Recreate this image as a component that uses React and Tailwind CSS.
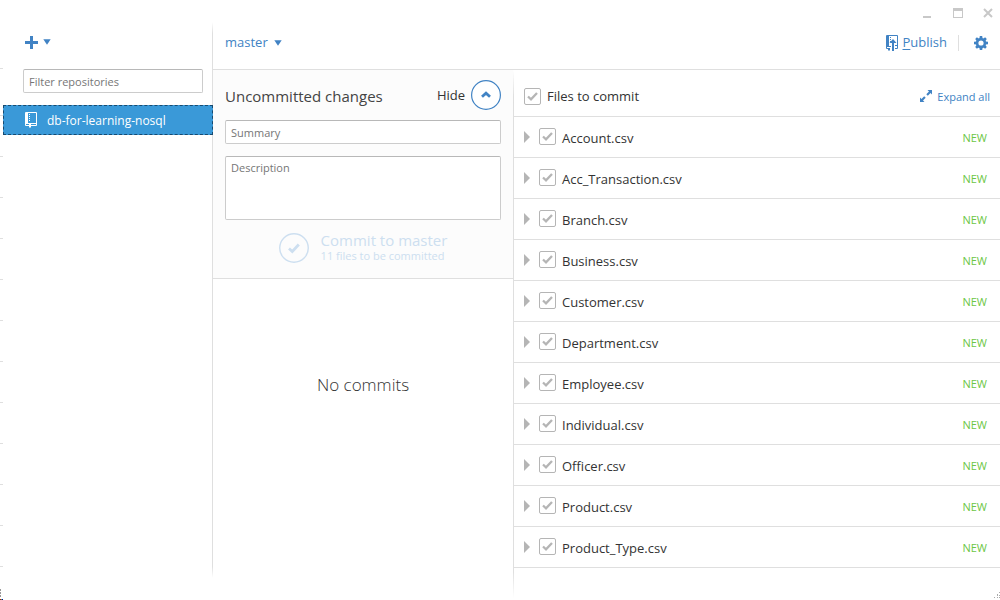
import React from "react";

const files = [
  "Account.csv",
  "Acc_Transaction.csv",
  "Branch.csv",
  "Business.csv",
  "Customer.csv",
  "Department.csv",
  "Employee.csv",
  "Individual.csv",
  "Officer.csv",
  "Product.csv",
  "Product_Type.csv",
];

const field =
  "block w-full rounded-xs border border-[#cccccc] border-t-[#b8b8b8] bg-white px-[5px] text-[11px] text-[#333333] placeholder:text-[#767676] outline-none";

function CaretDown() {
  return (
    <svg width="8" height="6" viewBox="0 0 8 6" aria-hidden="true">
      <path d="M0.300 0.300h7.400L4 5.800z" fill="#4183c4" />
    </svg>
  );
}

function PlusIcon() {
  return (
    <svg width="13" height="13" viewBox="0 0 13 13" aria-hidden="true">
      <path d="M5 0h3v5h5v3H8v5H5V8H0V5h5z" fill="#4183c4" />
    </svg>
  );
}

function RepoIcon() {
  return (
    <svg width="12" height="16" viewBox="0 0 12 16" aria-hidden="true">
      <path
        fill="#fff"
        fillRule="evenodd"
        d="M1 0h10q1 0 1 1v12q0 1-1 1H6v2l-1-1-1 1v-2H1q-1 0-1-1V1q0-1 1-1zM3 1v10h8V1zM1 12v1h3v-1zM6 12v1h5v-1z"
      />
      <path fill="#fff" d="M4 2h1v1H4zM4 4h1v1H4zM4 6h1v1H4zM4 8h1v1H4z" />
    </svg>
  );
}

function PublishIcon() {
  return (
    <svg width="12" height="16" viewBox="0 0 12 16" aria-hidden="true">
      <path
        fill="#4183c4"
        fillRule="evenodd"
        d="M1 0h10q1 0 1 1v12q0 1-1 1H9v-1h2v-2H9v-1h2V1H3v10h2v1H1v1h3v3l-1-1-1 1v-2H1q-1 0-1-1V1q0-1 1-1z"
      />
      <path fill="#4183c4" d="M4 2h1v1H4zM4 4h1v1H4zM4 6h1v1H4zM7 4l3.500 4H8v8H6V8H3.500z" />
    </svg>
  );
}

function GearIcon() {
  return (
    <svg width="14" height="14" viewBox="0 0 14 14" aria-hidden="true">
      <g fill="#4183c4">
        <path
          fillRule="evenodd"
          d="M7 1.800a5.200 5.200 0 1 0 0 10.400a5.200 5.200 0 1 0 0-10.400zM7 4.400a2.600 2.600 0 1 1 0 5.200a2.600 2.600 0 1 1 0-5.200z"
        />
        <path d="M5.800 0h2.400l.4 2.500H5.400zM5.800 14h2.400l.4-2.500H5.400zM0 5.800v2.400l2.500.4V5.400zM14 5.800v2.400l-2.500.4V5.400z" />
        <path d="M1.200 2.900l1.700-1.700 2 1.500-2.200 2.200zM12.800 2.900l-1.700-1.700-2 1.500 2.200 2.200zM1.200 11.100l1.700 1.700 2-1.500-2.200-2.200zM12.800 11.100l-1.700 1.700-2-1.500 2.200-2.200z" />
      </g>
    </svg>
  );
}

function ExpandIcon() {
  return (
    <svg width="12" height="12" viewBox="0 0 12 12" aria-hidden="true">
      <path
        fill="#4183c4"
        d="M7.500 0H12v4.500l-1.500-1.500-2.700 2.700-1.500-1.500L9 1.500zM4.500 12H0V7.500L1.500 9l2.700-2.700 1.500 1.500L3 10.500z"
      />
    </svg>
  );
}

function CheckBox({ id }) {
  return (
    <span className="grid shrink-0">
      <input
        id={id}
        type="checkbox"
        defaultChecked
        className="peer col-start-1 row-start-1 size-[17px] appearance-none rounded-xs border border-[#b5b5b5] bg-white"
      />
      <svg
        width="17"
        height="17"
        viewBox="0 0 17 17"
        aria-hidden="true"
        className="pointer-events-none invisible col-start-1 row-start-1 peer-checked:visible"
      >
        <path d="M4 8.500l3 2.800 6-6.300" fill="none" stroke="#b5b5b5" strokeWidth="2.300" />
      </svg>
    </span>
  );
}

function WindowControls() {
  return (
    <div className="flex h-[22px] shrink-0 items-end justify-end gap-5 pr-[7px] pb-1">
      <button type="button" aria-label="Minimize" className="block">
        <svg width="12" height="10" viewBox="0 0 12 10" className="block">
          <path d="M2 8h8v2H2z" fill="#c8c8c8" />
        </svg>
      </button>
      <button type="button" aria-label="Maximize" className="block">
        <svg width="10" height="10" viewBox="0 0 10 10" className="block">
          <path d="M0 0h10v10H0zM1 3v6h8V3z" fill="#c8c8c8" fillRule="evenodd" />
        </svg>
      </button>
      <button type="button" aria-label="Close" className="block">
        <svg width="10" height="10" viewBox="0 0 10 10" className="block">
          <path d="M1 1l8 8M9 1l-8 8" stroke="#c8c8c8" strokeWidth="2" />
        </svg>
      </button>
    </div>
  );
}

function Sidebar() {
  return (
    <aside className="flex w-[209px] shrink-0 flex-col">
      <div className="flex h-[47px] items-center pt-px pl-[22px]">
        <button type="button" aria-label="Add repository" className="flex h-5 items-center gap-[5px] pb-2">
          <PlusIcon />
          <CaretDown />
        </button>
      </div>
      <div className="pr-[9px] pl-5">
        <input aria-label="Filter repositories" placeholder="Filter repositories" className={`${field} h-6`} />
      </div>
      <a
        href="#repository"
        className="relative z-10 mt-3 -mr-px flex h-[30px] items-center gap-2.5 border border-dashed border-[#174a70] bg-[#3a99d8] pl-[21px] text-xs text-white"
      >
        <RepoIcon />
        <span className="pt-0.5">db-for-learning-nosql</span>
      </a>
    </aside>
  );
}

function CommitPanel() {
  return (
    <section className="flex w-[300px] shrink-0 flex-col">
      <form className="border-b border-[#dfdfdf] bg-[#fcfcfc] px-3 pt-2.5 pb-3.5">
        <div className="flex items-center justify-between">
          <h1 className="pt-0.5 text-[15px] text-[#444444]">Uncommitted changes</h1>
          <button type="button" className="flex items-center gap-1.5 text-[13px] text-[#333333]">
            <span className="pt-0.5">Hide</span>
            <svg width="30" height="30" viewBox="0 0 30 30" aria-hidden="true">
              <circle cx="15" cy="15" r="14.400" fill="#fff" stroke="#4183c4" strokeWidth="1.200" />
              <path d="M11 16.800l4-3.600 4 3.600" fill="none" stroke="#4183c4" strokeWidth="2.800" />
            </svg>
          </button>
        </div>
        <input aria-label="Summary" placeholder="Summary" className={`${field} mt-2.5 h-6`} />
        <textarea
          aria-label="Description"
          placeholder="Description"
          className={`${field} mt-3 h-16 resize-none pt-[3px] leading-4`}
        />
        <button type="button" disabled className="mx-auto mt-3 flex h-8 items-center gap-3 text-left text-[#cddff0]">
          <svg width="30" height="30" viewBox="0 0 30 30" aria-hidden="true">
            <circle cx="15" cy="15" r="14.300" fill="none" stroke="#cddff0" strokeWidth="1.400" />
            <path d="M10 15.500l3.300 3 6.500-7" fill="none" stroke="#cddff0" strokeWidth="2.800" />
          </svg>
          <span>
            <span className="block text-[15px] leading-4">Commit to master</span>
            <span className="block text-[11px] leading-4">11 files to be committed</span>
          </span>
        </button>
      </form>
      <p className="mt-24 text-center text-[17px] leading-5 font-light text-[#333333]">No commits</p>
    </section>
  );
}

function FilesPanel() {
  return (
    <section className="flex min-w-0 flex-1">
      <div className="mb-0.5 w-px shrink-0 bg-linear-to-b from-transparent via-[#dfdfdf] via-5% to-[#dfdfdf] mask-b-from-95%" />
      <div className="min-w-0 flex-1">
        <div className="flex h-[47px] items-center border-b border-[#dfdfdf] pt-1.5 pr-2.5 pl-2.5">
          <CheckBox id="all-files" />
          <label htmlFor="all-files" className="ml-1.5 pt-0.5 text-[13px] text-[#333333]">
            Files to commit
          </label>
          <button type="button" className="ml-auto flex items-center gap-[5px] text-[11px] text-[#4183c4]">
            <ExpandIcon />
            <span className="pt-0.5">Expand all</span>
          </button>
        </div>
        <ul>
          {files.map((name) => (
            <li key={name} className="flex h-[41px] items-center border-b border-[#dfdfdf] pr-[13px] pl-2.5">
              <button type="button" aria-label={`Expand ${name}`}>
                <svg width="6" height="12" viewBox="0 0 6 12" className="block">
                  <path d="M0 0l6 6-6 6z" fill="#b5b5b5" />
                </svg>
              </button>
              <span className="ml-[9px] pb-px">
                <CheckBox id={name} />
              </span>
              <label htmlFor={name} className="ml-1.5 pt-1 text-[13px] text-[#333333]">
                {name}
              </label>
              <span className="ml-auto pt-0.5 text-[11px] text-[#6cc644]">NEW</span>
            </li>
          ))}
        </ul>
      </div>
    </section>
  );
}

function Main() {
  return (
    <main className="flex min-w-0 flex-1 flex-col">
      <header className="flex h-12 items-center border-b border-[#dfdfdf] pr-3 pb-1.5 pl-3 text-[13px] text-[#4183c4]">
        <button type="button" className="flex items-center gap-1.5">
          master
          <CaretDown />
        </button>
        <button type="button" className="ml-auto flex items-center gap-[5px]">
          <PublishIcon />
          <span>
            <u className="underline-offset-2">P</u>ublish
          </span>
        </button>
        <span className="mr-[15px] ml-[11px] h-4 w-px bg-[#dfdfdf]" />
        <button type="button" aria-label="Settings">
          <GearIcon />
        </button>
      </header>
      <div className="flex flex-1">
        <CommitPanel />
        <FilesPanel />
      </div>
    </main>
  );
}

export default function App() {
  return (
    <div className="relative flex min-h-screen flex-col bg-white font-['Open_Sans','Noto_Sans',sans-serif]">
      <WindowControls />
      <div className="flex flex-1">
        <div className="w-[3px] shrink-0" aria-hidden="true">
          <div className="h-[47px] border-b border-[#dfdfdf]" />
          <div className="h-[47px] border-b border-[#dfdfdf]" />
          {files.map((name) => (
            <div key={name} className="h-[41px] border-b border-[#dfdfdf]" />
          ))}
        </div>
        <Sidebar />
        <div className="mb-[22px] w-px shrink-0 bg-[#dfdfdf] mask-t-from-98% mask-b-from-98%" />
        <Main />
      </div>
      <svg width="6" height="6" viewBox="0 0 6 6" aria-hidden="true" className="absolute right-0 bottom-0.5">
        <path d="M5 0h1v1H5zM3 2h1v2H3zM5 3h1v1H5zM0 5h1v1H0zM3 5h1v1H3zM5 5h1v1H5z" fill="#aaa" />
      </svg>
      <svg width="3" height="12" viewBox="0 0 3 12" aria-hidden="true" className="absolute bottom-0 left-0">
        <path d="M0 1h1v2H0zM0 4h1v2H0zM0 7h1v2H0z" fill="#999" />
        <path d="M0 11h1v1H0z" fill="#c00" />
        <path d="M1 11h1v1H1z" fill="#3a5" />
        <path d="M2 11h1v1H2z" fill="#00a" />
      </svg>
    </div>
  );
}
